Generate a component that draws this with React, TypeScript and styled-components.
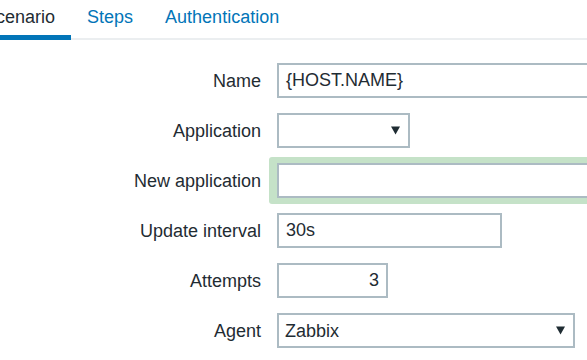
import styled, { createGlobalStyle, css } from 'styled-components';

const GlobalStyle = createGlobalStyle`
    body {
        margin: 0;
        background: #ffffff;
        font-family: 'Liberation Sans', Arial, sans-serif;
        color: #1f2c33;
        overflow: hidden;
    }
`;

const Page = styled.div`
    width: 587px;
    height: 360px;
    overflow: hidden;
`;

const TabBar = styled.nav`
    display: flex;
    height: 40px;
    margin-left: -32px;
    border-bottom: 2px solid #ebeef0;
    box-sizing: border-box;
`;

const Tab = styled.a<{ $active?: boolean }>`
    display: block;
    height: 40px;
    box-sizing: border-box;
    padding: 7px 16px 0 16px;
    margin-bottom: -2px;
    font-size: 18px;
    line-height: 20px;
    white-space: nowrap;
    color: #0275b8;
    cursor: pointer;
    ${({ $active }) =>
        $active &&
        css`
            color: #1f2c33;
            border-bottom: 5px solid #0275b8;
        `}
`;

const Form = styled.div`
    display: grid;
    grid-template-columns: 261px 1fr;
    grid-auto-rows: 35px;
    column-gap: 16px;
    row-gap: 15px;
    padding-top: 23px;
`;

const Label = styled.label`
    display: flex;
    align-items: center;
    justify-content: flex-end;
    font-size: 18px;
    line-height: 20px;
    white-space: nowrap;
`;

const Field = styled.div`
    display: flex;
    align-items: center;
    min-width: 0;
`;

const Highlight = styled.div`
    display: flex;
    align-items: center;
    margin: -6px 0 -6px -8px;
    padding: 6px 0 6px 8px;
    background: #c5e2c8;
    border-radius: 3px;
    width: 460px;
    flex-shrink: 0;
`;

const boxBase = css`
    box-sizing: border-box;
    height: 35px;
    flex-shrink: 0;
    border: 2px solid #acbbc3;
    background: #ffffff;
    font-family: 'Liberation Sans', Arial, sans-serif;
    font-size: 18px;
    line-height: 20px;
    color: #1f2c33;
`;

const TextInput = styled.div<{ $width: number; $right?: boolean }>`
    ${boxBase};
    width: ${({ $width }) => $width}px;
    padding: 5px 7px;
    white-space: nowrap;
    text-align: ${({ $right }) => ($right ? 'right' : 'left')};
`;

const Select = styled.div<{ $width: number }>`
    ${boxBase};
    width: ${({ $width }) => $width}px;
    display: flex;
    align-items: center;
    justify-content: space-between;
    padding: 0 8px 0 6px;
`;

const Arrow = () => (
    <svg width="9" height="9" viewBox="0 0 9 9">
        <path d="M0 0.5 H9 L4.5 8.5 Z" fill="#1f2c33" />
    </svg>
);

export default function App() {
    return (
        <Page>
            <GlobalStyle />
            <TabBar>
                <Tab $active>Scenario</Tab>
                <Tab>Steps</Tab>
                <Tab>Authentication</Tab>
            </TabBar>
            <Form>
                <Label>Name</Label>
                <Field>
                    <TextInput $width={450}>{'{HOST.NAME}'}</TextInput>
                </Field>

                <Label>Application</Label>
                <Field>
                    <Select $width={133}>
                        <span />
                        <Arrow />
                    </Select>
                </Field>

                <Label>New application</Label>
                <Field>
                    <Highlight>
                        <TextInput $width={450} />
                    </Highlight>
                </Field>

                <Label>Update interval</Label>
                <Field>
                    <TextInput $width={225}>30s</TextInput>
                </Field>

                <Label>Attempts</Label>
                <Field>
                    <TextInput $width={111} $right>
                        3
                    </TextInput>
                </Field>

                <Label>Agent</Label>
                <Field>
                    <Select $width={298}>
                        <span>Zabbix</span>
                        <Arrow />
                    </Select>
                </Field>
            </Form>
        </Page>
    );
}
